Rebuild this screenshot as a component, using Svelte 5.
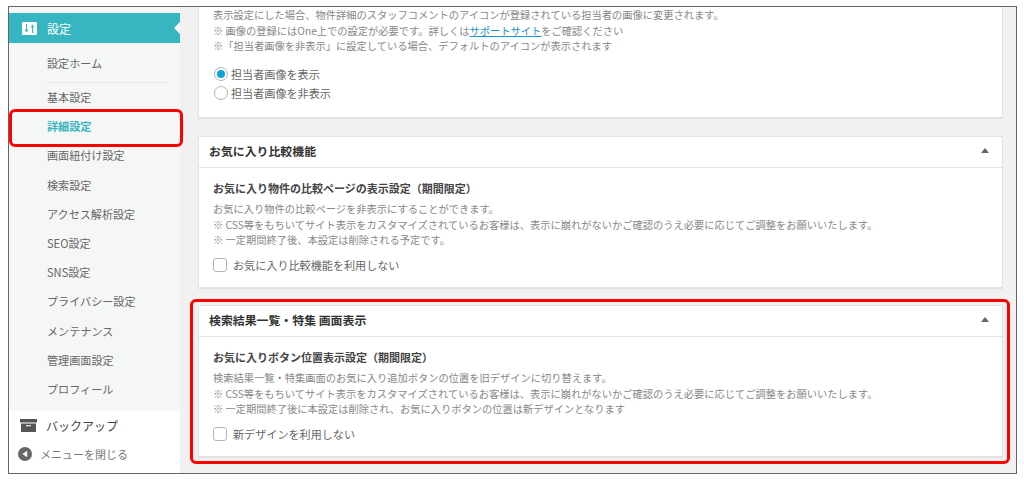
<script lang="ts">
  const menu = [
    { label: '基本設定' },
    { label: '詳細設定', active: true },
    { label: '画面紐付け設定' },
    { label: '検索設定' },
    { label: 'アクセス解析設定' },
    { label: 'SEO設定' },
    { label: 'SNS設定' },
    { label: 'プライバシー設定' },
    { label: 'メンテナンス' },
    { label: '管理画面設定' },
    { label: 'プロフィール' }
  ];
</script>

<div class="page">
  <div class="frame">
    <aside>
      <div class="menu">
        <div class="head">
          <svg class="head-icon" width="15" height="13" viewBox="0 0 15 13">
            <rect width="15" height="13" rx="1" fill="#fff" />
            <path d="M4.500 2v6M10.500 11V5" stroke="#37b5c1" stroke-width="1" fill="none" />
            <path d="M2.700 7.500h3.600L4.500 10.800zM8.700 5.500h3.600L10.500 2.200z" fill="#37b5c1" />
          </svg>
          <span>設定</span>
          <i class="notch"></i>
        </div>
        <div class="home">設定ホーム</div>
        <ul>
          {#each menu as item}
            <li class:active={item.active}>{item.label}</li>
          {/each}
        </ul>
      </div>
      <div class="backup">
        <svg width="17" height="13" viewBox="0 0 17 13">
          <rect width="17" height="3.500" fill="#555" />
          <rect x="1" y="4.500" width="15" height="8.500" fill="#555" />
          <rect x="6" y="6" width="5" height="1.300" fill="#ddd" />
        </svg>
        <span>バックアップ</span>
      </div>
      <div class="close">
        <svg width="14" height="14" viewBox="0 0 14 14">
          <circle cx="7" cy="7" r="7" fill="#666" />
          <path d="M9.200 3.800v6.400L4.400 7z" fill="#fff" />
        </svg>
        <span>メニューを閉じる</span>
      </div>
    </aside>

    <main>
      <section class="card first">
        <div class="body">
          <p class="desc">表示設定にした場合、物件詳細のスタッフコメントのアイコンが登録されている担当者の画像に変更されます。<br />※ 画像の登録にはOne上での設定が必要です。詳しくは<a href="#top">サポートサイト</a>をご確認ください<br />※「担当者画像を非表示」に設定している場合、デフォルトのアイコンが表示されます</p>
          <div class="radios">
            <label><i class="radio on"></i>担当者画像を表示</label>
            <label><i class="radio"></i>担当者画像を非表示</label>
          </div>
        </div>
      </section>

      <section class="card">
        <header>お気に入り比較機能<i class="tri"></i></header>
        <div class="body">
          <h3>お気に入り物件の比較ページの表示設定（期間限定）</h3>
          <p class="desc">お気に入り物件の比較ページを非表示にすることができます。<br />※ CSS等をもちいてサイト表示をカスタマイズされているお客様は、表示に崩れがないかご確認のうえ必要に応じてご調整をお願いいたします。<br />※ 一定期間終了後、本設定は削除される予定です。</p>
          <label class="check"><i class="box"></i>お気に入り比較機能を利用しない</label>
        </div>
      </section>

      <section class="card">
        <header>検索結果一覧・特集 画面表示<i class="tri"></i></header>
        <div class="body">
          <h3>お気に入りボタン位置表示設定（期間限定）</h3>
          <p class="desc">検索結果一覧・特集画面のお気に入り追加ボタンの位置を旧デザインに切り替えます。<br />※ CSS等をもちいてサイト表示をカスタマイズされているお客様は、表示に崩れがないかご確認のうえ必要に応じてご調整をお願いいたします。<br />※ 一定期間終了後に本設定は削除され、お気に入りボタンの位置は新デザインとなります</p>
          <label class="check"><i class="box"></i>新デザインを利用しない</label>
        </div>
      </section>
    </main>

    <div class="mark mark-menu"></div>
    <div class="mark mark-card"></div>
  </div>
</div>

<style>
  :global(body) {
    margin: 0;
    background: #fff;
  }

  .page {
    padding: 6px 7px 0 8px;
    height: 483px;
    box-sizing: border-box;
    font-family: "Noto Sans CJK JP", "Noto Sans", sans-serif;
  }

  .frame {
    position: relative;
    display: flex;
    height: 468px;
    box-sizing: border-box;
    border: 1px solid #666;
    background: #f1f1f1;
    overflow: hidden;
  }

  aside {
    width: 171px;
    flex: none;
    display: flex;
    flex-direction: column;
    background: #fff;
  }

  .menu {
    height: 404px;
    padding-top: 6px;
    box-sizing: border-box;
    background: #f5f6f6;
  }

  .head {
    position: relative;
    display: flex;
    align-items: center;
    gap: 10px;
    height: 30px;
    padding-left: 13px;
    background: #37b5c1;
    color: #fff;
    font-size: 12px;
  }

  .notch {
    position: absolute;
    right: 0;
    top: 9px;
    border: 6px solid transparent;
    border-left: 0;
    border-right: 6px solid #f5f6f6;
  }

  .home {
    margin: 0 12px 0 38px;
    height: 39px;
    line-height: 40px;
    border-bottom: 1px solid #e6e6e6;
    font-size: 11.100px;
    color: #666;
  }

  ul {
    list-style: none;
    margin: 0;
    padding: 0 0 0 38px;
  }

  li {
    height: 29.200px;
    line-height: 29.200px;
    font-size: 11.100px;
    color: #666;
  }

  li.active {
    color: #37b5c1;
    font-weight: 700;
  }

  .backup {
    display: flex;
    align-items: center;
    gap: 9px;
    height: 29px;
    padding-left: 11px;
    font-size: 12px;
    color: #444;
  }

  .close {
    display: flex;
    align-items: center;
    gap: 8px;
    height: 27px;
    padding-left: 9px;
    font-size: 11px;
    color: #777;
  }

  main {
    flex: 1;
    padding-right: 13px;
    padding-left: 18px;
    min-width: 0;
  }

  .card {
    height: 153px;
    margin-bottom: 16px;
    box-sizing: border-box;
    background: #fff;
    border: 1px solid #e2e2e2;
    border-bottom-width: 2px;
  }

  .card.first {
    height: 112px;
    margin-bottom: 17px;
    border-top: 0;
  }

  header {
    position: relative;
    height: 31px;
    padding-left: 10px;
    line-height: 28px;
    box-sizing: border-box;
    border-bottom: 1px solid #e4e4e4;
    font-size: 11.900px;
    font-weight: 700;
    color: #333;
  }

  .tri {
    position: absolute;
    right: 13px;
    top: 11px;
    border: 4px solid transparent;
    border-top: 0;
    border-bottom: 5px solid #666;
  }

  .body {
    padding: 12px 14px 0;
  }

  .first .body {
    padding-top: 0;
    padding-left: 14px;
  }

  h3 {
    margin: 0 0 5px;
    font-size: 11px;
    line-height: 16px;
    font-weight: 700;
    color: #444;
  }

  .desc {
    margin: 0;
    font-size: 10.250px;
    line-height: 15.500px;
    color: #888;
    white-space: nowrap;
  }

  .desc a {
    color: #1b8fcf;
  }

  .radios {
    margin-top: 11px;
    margin-left: 1px;
  }

  label {
    display: flex;
    align-items: center;
    gap: 3px;
    height: 19px;
    font-size: 11.100px;
    color: #666;
  }

  .radio {
    position: relative;
    width: 14px;
    height: 14px;
    box-sizing: border-box;
    border: 1px solid #b5b5b5;
    border-radius: 50%;
    background: #fff;
  }

  .radio.on::after {
    content: "";
    position: absolute;
    inset: 2px;
    border-radius: 50%;
    background: #0aa5d6;
  }

  .check {
    gap: 6px;
    margin-top: 8px;
  }

  .box {
    width: 14px;
    height: 14px;
    box-sizing: border-box;
    border: 1px solid #b5b5b5;
    border-radius: 3px;
    background: #fff;
  }

  .mark {
    position: absolute;
    box-sizing: border-box;
    border: 3px solid #f00;
    border-radius: 6px;
    pointer-events: none;
  }

  .mark-menu {
    left: 0;
    top: 102px;
    width: 174px;
    height: 38px;
  }

  .mark-card {
    left: 181px;
    top: 292px;
    width: 820px;
    height: 165px;
  }
</style>
